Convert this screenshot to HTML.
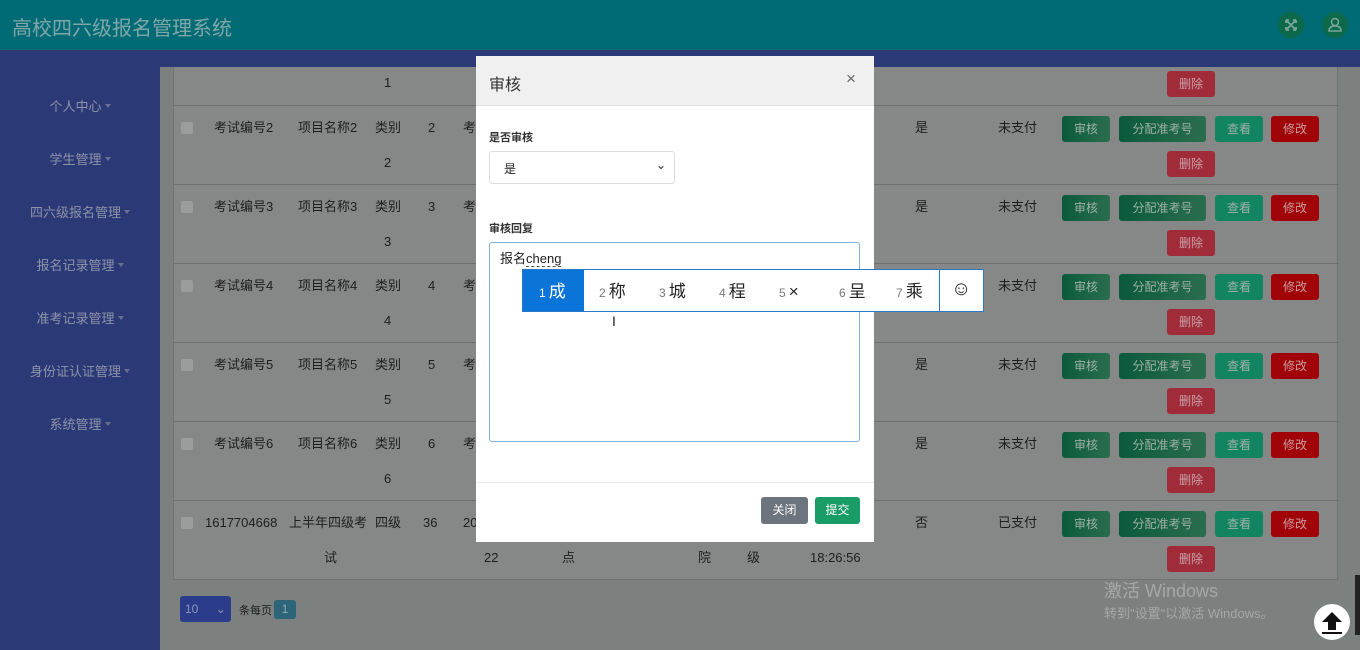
<!DOCTYPE html>
<html><head><meta charset="utf-8"><style>
*{margin:0;padding:0;box-sizing:border-box}
body{width:1360px;height:650px;overflow:hidden;position:relative;background:#7c807e;font-family:"Liberation Sans","Noto Sans CJK SC",sans-serif;font-size:13px;color:#1e1e1e}
.a{position:absolute;white-space:nowrap}
#hd{left:0;top:0;width:1360px;height:50px;background:#006b74}
#band{left:0;top:50px;width:1360px;height:17px;background:#2b3977}
#sb{left:0;top:50px;width:160px;height:600px;background:#2b3977}
.nav{width:160px;text-align:center;color:#8d93a8;font-size:13px}
.nav:after{content:"";display:inline-block;margin-left:3px;border:3px solid transparent;border-top:4px solid #6a7090;vertical-align:middle}
#tbl{left:173px;top:67px;width:1165px;height:513px;background:#858886;border:1px solid #6f7371;border-top:none}
.row{position:absolute;left:0;width:1165px;height:79px;border-top:1px solid #6c706e}
.row .a{top:13px;line-height:18px}
.l2{top:48px!important}
.cb{width:12px;height:12px;background:#9a9d9b;border-radius:2px;top:16px!important}
.b{height:26px;line-height:26px!important;text-align:center;color:#9fb0a6;font-size:12px;border-radius:3px;top:10px!important}
.g{background:linear-gradient(90deg,#0b5a3c,#2a6e4e)}
.t{background:#128462}
.r{background:#a00409;color:#c89a9a}
.d{background:#a02c3a;color:#c9a0a6;top:45px!important}
#mod{left:476px;top:56px;width:398px;height:486px;background:#fff}
.ime{font-size:17px;color:#222;line-height:20px}
.ime small{font-size:12px;color:#777;margin-right:3px}
</style></head><body>
<div class="a" id="hd"><div class="a" style="left:12px;top:12px;font-size:20px;color:#7fa7a9">高校四六级报名管理系统</div>
<div class="a" style="left:1278px;top:12px;width:26px;height:26px;border-radius:50%;background:#0c6a4a"><svg width="26" height="26" fill="none" stroke="#7aa59a" stroke-width="1.8"><path d="M8 8l10 10M18 8L8 18M8 8h3M8 8v3M18 8h-3M18 8v3M8 18h3M8 18v-3M18 18h-3M18 18v-3"/></svg></div>
<div class="a" style="left:1322px;top:12px;width:26px;height:26px;border-radius:50%;background:#0c6a4a"><svg width="26" height="26"><circle cx="13" cy="10" r="3.5" fill="none" stroke="#7aa59a" stroke-width="1.5"/><path d="M7 19c0-4 3-5 6-5s6 1 6 5z" fill="none" stroke="#7aa59a" stroke-width="1.5"/></svg></div></div>
<div class="a" id="band"></div>
<div class="a" id="sb">
<div class="a nav" style="top:46px">个人中心</div>
<div class="a nav" style="top:99px">学生管理</div>
<div class="a nav" style="top:152px">四六级报名管理</div>
<div class="a nav" style="top:205px">报名记录管理</div>
<div class="a nav" style="top:258px">准考记录管理</div>
<div class="a nav" style="top:311px">身份证认证管理</div>
<div class="a nav" style="top:364px">系统管理</div>
</div>
<div class="a" id="tbl">
<div class="row" style="top:-41px;border-top:none"><div class="a l2" style="left:210px">1</div><div class="a b d" style="left:993px;width:48px">删除</div></div>
<div class="row" style="top:38px"><div class="a cb" style="left:7px"></div><div class="a" style="left:40px">考试编号2</div><div class="a" style="left:124px">项目名称2</div><div class="a" style="left:201px">类别</div><div class="a" style="left:254px">2</div><div class="a" style="left:289px">考</div><div class="a" style="left:741px">是</div><div class="a" style="left:824px">未支付</div><div class="a b g" style="left:888px;width:48px">审核</div><div class="a b g" style="left:945px;width:87px">分配准考号</div><div class="a b t" style="left:1041px;width:48px">查看</div><div class="a b r" style="left:1097px;width:48px">修改</div><div class="a l2" style="left:210px">2</div><div class="a b d" style="left:993px;width:48px">删除</div></div>
<div class="row" style="top:117px"><div class="a cb" style="left:7px"></div><div class="a" style="left:40px">考试编号3</div><div class="a" style="left:124px">项目名称3</div><div class="a" style="left:201px">类别</div><div class="a" style="left:254px">3</div><div class="a" style="left:289px">考</div><div class="a" style="left:741px">是</div><div class="a" style="left:824px">未支付</div><div class="a b g" style="left:888px;width:48px">审核</div><div class="a b g" style="left:945px;width:87px">分配准考号</div><div class="a b t" style="left:1041px;width:48px">查看</div><div class="a b r" style="left:1097px;width:48px">修改</div><div class="a l2" style="left:210px">3</div><div class="a b d" style="left:993px;width:48px">删除</div></div>
<div class="row" style="top:196px"><div class="a cb" style="left:7px"></div><div class="a" style="left:40px">考试编号4</div><div class="a" style="left:124px">项目名称4</div><div class="a" style="left:201px">类别</div><div class="a" style="left:254px">4</div><div class="a" style="left:289px">考</div><div class="a" style="left:741px">是</div><div class="a" style="left:824px">未支付</div><div class="a b g" style="left:888px;width:48px">审核</div><div class="a b g" style="left:945px;width:87px">分配准考号</div><div class="a b t" style="left:1041px;width:48px">查看</div><div class="a b r" style="left:1097px;width:48px">修改</div><div class="a l2" style="left:210px">4</div><div class="a b d" style="left:993px;width:48px">删除</div></div>
<div class="row" style="top:275px"><div class="a cb" style="left:7px"></div><div class="a" style="left:40px">考试编号5</div><div class="a" style="left:124px">项目名称5</div><div class="a" style="left:201px">类别</div><div class="a" style="left:254px">5</div><div class="a" style="left:289px">考</div><div class="a" style="left:741px">是</div><div class="a" style="left:824px">未支付</div><div class="a b g" style="left:888px;width:48px">审核</div><div class="a b g" style="left:945px;width:87px">分配准考号</div><div class="a b t" style="left:1041px;width:48px">查看</div><div class="a b r" style="left:1097px;width:48px">修改</div><div class="a l2" style="left:210px">5</div><div class="a b d" style="left:993px;width:48px">删除</div></div>
<div class="row" style="top:354px"><div class="a cb" style="left:7px"></div><div class="a" style="left:40px">考试编号6</div><div class="a" style="left:124px">项目名称6</div><div class="a" style="left:201px">类别</div><div class="a" style="left:254px">6</div><div class="a" style="left:289px">考</div><div class="a" style="left:741px">是</div><div class="a" style="left:824px">未支付</div><div class="a b g" style="left:888px;width:48px">审核</div><div class="a b g" style="left:945px;width:87px">分配准考号</div><div class="a b t" style="left:1041px;width:48px">查看</div><div class="a b r" style="left:1097px;width:48px">修改</div><div class="a l2" style="left:210px">6</div><div class="a b d" style="left:993px;width:48px">删除</div></div>
<div class="row" style="top:433px"><div class="a cb" style="left:7px"></div><div class="a" style="left:31px">1617704668</div><div class="a" style="left:115px">上半年四级考</div><div class="a" style="left:201px">四级</div><div class="a" style="left:249px">36</div><div class="a" style="left:289px">20</div><div class="a" style="left:741px">否</div><div class="a" style="left:824px">已支付</div><div class="a b g" style="left:888px;width:48px">审核</div><div class="a b g" style="left:945px;width:87px">分配准考号</div><div class="a b t" style="left:1041px;width:48px">查看</div><div class="a b r" style="left:1097px;width:48px">修改</div><div class="a l2" style="left:150px">试</div><div class="a l2" style="left:310px">22</div><div class="a l2" style="left:388px">点</div><div class="a l2" style="left:524px">院</div><div class="a l2" style="left:573px">级</div><div class="a l2" style="left:636px">18:26:56</div><div class="a b d" style="left:993px;width:48px">删除</div></div>
</div>
<div class="a" style="left:180px;top:596px;width:51px;height:26px;background:#2b3c8a;border-radius:3px;color:#8d96b8;font-size:12px;line-height:26px;padding-left:5px">10 <span style="margin-left:14px">⌄</span></div>
<div class="a" style="left:239px;top:602px;font-size:11px">条每页</div>
<div class="a" style="left:274px;top:600px;width:22px;height:19px;background:#2e6479;border-radius:3px;color:#8ea9b4;font-size:12px;text-align:center;line-height:19px">1</div>
<div class="a" style="left:1104px;top:577px;font-size:18px;color:#a4a8a6">激活 Windows</div>
<div class="a" style="left:1104px;top:603px;font-size:13px;color:#a4a8a6">转到"设置"以激活 Windows。</div>
<div class="a" style="left:1314px;top:604px;width:36px;height:36px;border-radius:50%;background:#fff"><svg width="36" height="36"><path d="M18 8l-10 10h6v8h8v-8h6z" fill="#111"/><rect x="8" y="28" width="20" height="2" fill="#111"/></svg></div>
<div class="a" style="left:1355px;top:575px;width:5px;height:60px;background:#222"></div>
<div class="a" id="mod">
<div class="a" style="left:0;top:0;width:398px;height:50px;background:#f0f0f0;border-bottom:1px solid #e3e3e3"></div>
<div class="a" style="left:13px;top:15px;font-size:16px;color:#333">审核</div>
<div class="a" style="left:370px;top:13px;font-size:17px;color:#666">×</div>
<div class="a" style="left:13px;top:73px;font-size:11px;color:#333;font-weight:bold">是否审核</div>
<div class="a" style="left:13px;top:95px;width:186px;height:33px;border:1px solid #ddd;border-radius:3px;padding:8px 0 0 14px;font-size:12px">是<span style="position:absolute;right:8px;top:6px;font-size:12px">⌄</span></div>
<div class="a" style="left:13px;top:164px;font-size:11px;color:#333;font-weight:bold">审核回复</div>
<div class="a" style="left:13px;top:186px;width:371px;height:200px;border:1px solid #80b3d9;border-radius:3px;padding:5px 10px;font-size:13px">报名<span style="border-bottom:1px dashed #555">cheng</span></div>
<div class="a" style="left:0;top:426px;width:398px;height:1px;background:#e8e8e8"></div>
<div class="a" style="left:285px;top:441px;width:47px;height:27px;background:#6c757d;border-radius:3px;color:#fff;font-size:12px;text-align:center;line-height:27px">关闭</div>
<div class="a" style="left:339px;top:441px;width:45px;height:27px;background:#1a9c66;border-radius:3px;color:#fff;font-size:12px;text-align:center;line-height:27px">提交</div>
</div>
<div class="a" style="left:522px;top:269px;width:462px;height:43px;background:#fff;border:1px solid #2a78c8">
<div class="a" style="left:0;top:0;width:61px;height:41px;background:#0a74d8"></div>
<div class="a ime" style="left:16px;top:12px;color:#fff"><small style="color:#fff">1</small>成</div>
<div class="a ime" style="left:76px;top:12px"><small>2</small>称</div>
<div class="a ime" style="left:136px;top:12px"><small>3</small>城</div>
<div class="a ime" style="left:196px;top:12px"><small>4</small>程</div>
<div class="a ime" style="left:256px;top:12px"><small>5</small>×</div>
<div class="a ime" style="left:316px;top:12px"><small>6</small>呈</div>
<div class="a ime" style="left:373px;top:12px"><small>7</small>乘</div>
<div class="a" style="left:416px;top:0;width:1px;height:41px;background:#2a78c8"></div>
<div class="a" style="left:428px;top:8px;font-size:20px">☺</div>
</div>
<div class="a" style="left:612px;top:313px;font-size:14px">I</div>
</body></html>
